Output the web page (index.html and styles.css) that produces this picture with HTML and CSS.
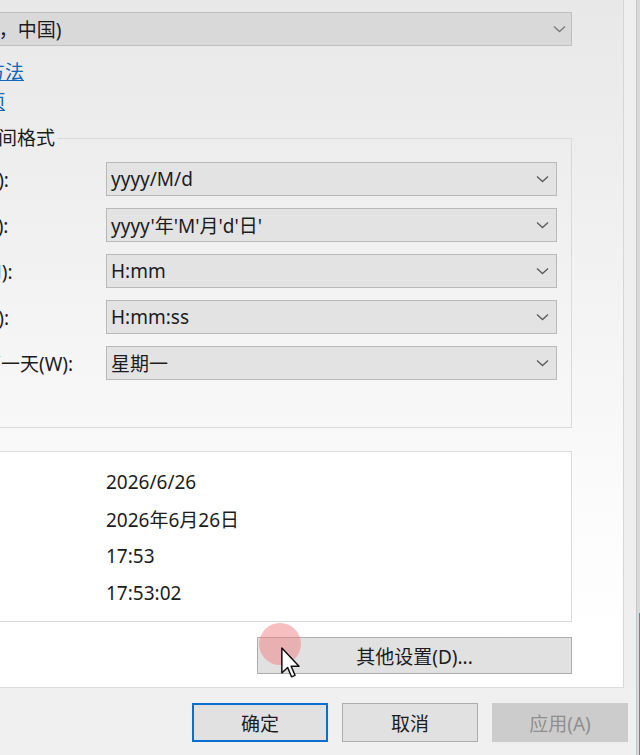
FILE: index.html
```html
<!DOCTYPE html>
<html lang="zh-CN">
<head>
    <meta charset="UTF-8">
    <meta name="viewport" content="width=device-width, initial-scale=1.0">
    <title>区域 - 格式</title>
    <link rel="stylesheet" href="styles.css">
</head>
<body>
    <div class="screen">
        <div class="dialog">
            <div class="tab-page">
                <div class="column">
                    <div class="combo top-combo">
                        <span>中文(简体，中国)</span>
                        <svg class="chevron" width="13" height="8" viewBox="0 0 13 8"><path d="M1 1.5 L6.5 6.5 L12 1.5" /></svg>
                    </div>

                    <a class="link" href="#">更改排序方法</a>
                    <a class="link" href="#">语言首选项</a>

                    <fieldset class="group formats">
                        <legend>日期和时间格式</legend>
                        <div class="row">
                            <label>短日期(S):</label>
                            <div class="combo"><span>yyyy/M/d</span><svg class="chevron" width="13" height="8" viewBox="0 0 13 8"><path d="M1 1.5 L6.5 6.5 L12 1.5" /></svg></div>
                        </div>
                        <div class="row">
                            <label>长日期(L):</label>
                            <div class="combo"><span>yyyy'年'M'月'd'日'</span><svg class="chevron" width="13" height="8" viewBox="0 0 13 8"><path d="M1 1.5 L6.5 6.5 L12 1.5" /></svg></div>
                        </div>
                        <div class="row">
                            <label>短时间(H):</label>
                            <div class="combo"><span>H:mm</span><svg class="chevron" width="13" height="8" viewBox="0 0 13 8"><path d="M1 1.5 L6.5 6.5 L12 1.5" /></svg></div>
                        </div>
                        <div class="row">
                            <label>长时间(T):</label>
                            <div class="combo"><span>H:mm:ss</span><svg class="chevron" width="13" height="8" viewBox="0 0 13 8"><path d="M1 1.5 L6.5 6.5 L12 1.5" /></svg></div>
                        </div>
                        <div class="row">
                            <label>一周的第一天(W):</label>
                            <div class="combo"><span>星期一</span><svg class="chevron" width="13" height="8" viewBox="0 0 13 8"><path d="M1 1.5 L6.5 6.5 L12 1.5" /></svg></div>
                        </div>
                    </fieldset>

                    <fieldset class="group sample">
                        <legend>示例</legend>
                        <div class="sample-row"><span class="sample-label">短日期:</span><span>2026/6/26</span></div>
                        <div class="sample-row"><span class="sample-label">长日期:</span><span>2026年6月26日</span></div>
                        <div class="sample-row"><span class="sample-label">短时间:</span><span>17:53</span></div>
                        <div class="sample-row"><span class="sample-label">长时间:</span><span>17:53:02</span></div>
                    </fieldset>

                    <div class="more-row">
                        <button class="btn more">其他设置(D)...</button>
                    </div>
                </div>
            </div>

            <div class="footer">
                <button class="btn default">确定</button>
                <button class="btn">取消</button>
                <button class="btn disabled">应用(A)</button>
            </div>
        </div>
        <div class="edge"><div class="edge-blue"></div></div>
    </div>

    <!-- mouse pointer from the recording -->
    <div class="click-dot"></div>
    <svg class="cursor" width="20" height="32" viewBox="0 0 12 19">
        <path d="M0.5 0.5 L0.5 15.5 L4 12.2 L6.3 17.8 L8.4 16.9 L6.1 11.4 L10.8 11.4 Z" />
    </svg>
</body>
</html>
```

FILE: styles.css
```css
body {
    margin: 0;
    overflow: hidden;
    background-color: #d8d8d8;
    font-family: "Noto Sans", "Noto Sans CJK SC", sans-serif;
    font-size: 19px;
    color: #1c1c1c;
}

.screen {
    display: flex;
    width: 640px;
    height: 755px;
}

/* dialog is wider than the window, its left part is cut off */
.dialog {
    flex-shrink: 0;
    width: 836px;
    margin-left: -200px;
    background-color: #efefef;
    border-right: 1px solid #c6c6c6;
    display: flex;
    flex-direction: column;
}

.tab-page {
    width: 713px;
    height: 675px;
    padding: 12px 0 0 110px;
    background: linear-gradient(to bottom, #e8e8e8 0, #f3f3f3 300px, #fbfbfb 500px, #ffffff 640px);
    border-right: 1px solid #d6d6d6;
    border-bottom: 1px solid #dcdcdc;
}

.column {
    width: 662px;
    display: flex;
    flex-direction: column;
}

/* combo boxes */
.combo {
    height: 34px;
    box-sizing: border-box;
    border: 1px solid #b9b9b9;
    background-color: #e3e3e3;
    display: flex;
    align-items: center;
    justify-content: space-between;
    padding: 0 7px 0 4px;
    white-space: nowrap;
}

.top-combo {
    background-color: #d9d9d9;
    border-color: #c0c0c0;
    padding: 0 5px 0 6px;
}

.chevron path {
    fill: none;
    stroke: #5a5a5a;
    stroke-width: 1.3;
}

.top-combo .chevron path {
    stroke: #7a7a7a;
}

.link {
    display: block;
    width: fit-content;
    line-height: 24px;
    color: #1065b8;
    text-decoration: underline;
    margin-top: 6px;
}

.top-combo + .link {
    margin-top: 14px;
}

/* group boxes */
.group {
    margin: 12px 0 0 0;
    min-width: 0;
    border: 1px solid #dadada;
}

.group legend {
    padding: 0 2px;
    margin-left: -3px;
    line-height: 24px;
    white-space: nowrap;
}

.formats {
    padding: 12px 14px 47px 12px;
    display: flex;
    flex-direction: column;
    gap: 12px;
}

.row {
    display: flex;
    align-items: center;
}

.row label {
    width: 181px;
    padding-left: 2px;
    flex-shrink: 0;
    white-space: nowrap;
}

.row .combo {
    flex: 1;
}

.sample {
    margin-top: 11px;
    padding: 0 14px 10px 12px;
    background-color: #ffffff;
}

.sample-row {
    height: 37px;
    display: flex;
    align-items: center;
}

.sample-label {
    width: 183px;
    flex-shrink: 0;
}

/* buttons */
.btn {
    font-family: inherit;
    font-size: 19px;
    color: #1c1c1c;
    background-color: #e1e1e1;
    border: 1px solid #adadad;
    padding: 0;
    height: 39px;
    width: 136px;
    box-sizing: border-box;
}

.more-row {
    display: flex;
    justify-content: flex-end;
    margin-top: 15px;
}

.more {
    width: 315px;
    height: 37px;
}

.footer {
    flex: 1;
    display: flex;
    justify-content: flex-end;
    gap: 14px;
    padding: 15px 8px 0 0;
    background-color: #f0f0f0;
}

.default {
    border: 2px solid #0a6fd0;
}

.disabled {
    background-color: #cccccc;
    border-color: #cccccc;
    color: #8f8f8f;
}

.edge {
    flex: 1;
    background-color: #d9d9d9;
    display: flex;
    flex-direction: column;
    align-items: flex-end;
}

.edge-blue {
    margin-top: 613px;
    flex: 1;
    width: 1px;
    background-color: #3d8ee0;
}

/* recorded mouse pointer, drawn over the page */
.click-dot {
    position: absolute;
    left: 259px;
    top: 623px;
    width: 42px;
    height: 42px;
    border-radius: 50%;
    background-color: rgba(240, 128, 128, 0.5);
}

.cursor {
    position: absolute;
    left: 281px;
    top: 647px;
}

.cursor path {
    fill: #ffffff;
    stroke: #111111;
    stroke-width: 0.9;
    stroke-linejoin: round;
}
```
